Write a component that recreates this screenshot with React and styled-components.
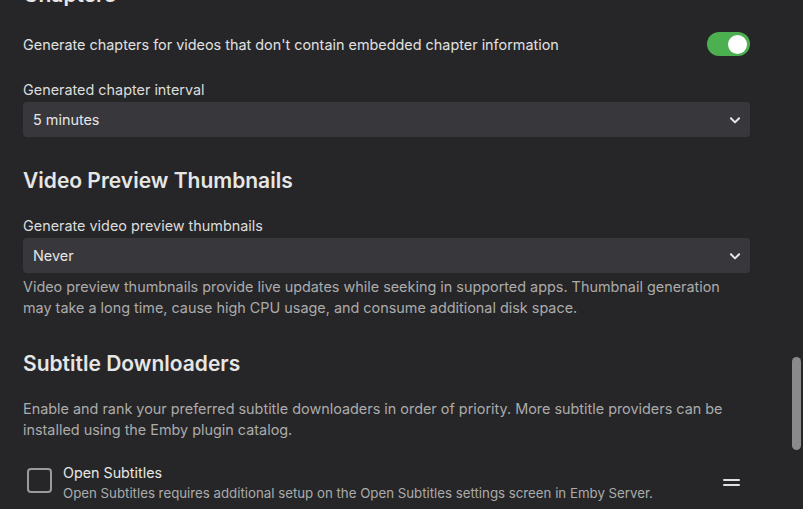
import React from "react";
import styled, { createGlobalStyle } from "styled-components";

const Global = createGlobalStyle`
  html, body { margin: 0; padding: 0; background: #262628; overflow: hidden; }
  body { font-family: Inter, "Noto Sans", "Liberation Sans", sans-serif; color: #e3e3e3; }
  * { box-sizing: border-box; }
`;

const Viewport = styled.div`
  position: relative;
  width: 803px;
  height: 509px;
  overflow: hidden;
  background: #262628;
`;

const Page = styled.div`
  width: 727px;
  margin: -18px 0 0 23px;
  display: flex;
  flex-direction: column;
`;

const Heading = styled.h2`
  margin: ${(p) => p.$mt || 0}px 0 0;
  font-size: 21px;
  line-height: 26px;
  font-weight: 600;
  color: #e6e6e6;
`;

const ToggleRow = styled.div`
  display: flex;
  align-items: center;
  justify-content: space-between;
  height: 24px;
  margin-top: 24px;
  font-size: 14.4px;
  color: #e0e0e0;
`;

const Switch = styled.div`
  position: relative;
  width: 43px;
  height: 24px;
  border-radius: 12px;
  background: #4caf50;
  flex-shrink: 0;
`;

const Knob = styled.div`
  position: absolute;
  right: 3px;
  top: 2.5px;
  width: 19px;
  height: 19px;
  border-radius: 50%;
  background: #fff;
`;

const Label = styled.div`
  margin-top: ${(p) => p.$mt || 0}px;
  font-size: 14.4px;
  line-height: 20px;
  color: #dcdcdc;
`;

const Select = styled.div`
  margin-top: 2px;
  height: 35px;
  border-radius: 4px;
  background: #38383c;
  display: flex;
  align-items: center;
  justify-content: space-between;
  padding: 0 8px 0 10px;
  font-size: 14.4px;
  color: #e6e6e6;
`;

const Description = styled.p`
  margin: ${(p) => p.$mt || 0}px 0 0;
  font-size: 14.4px;
  line-height: 21px;
  color: #ababab;
`;

const ProviderRow = styled.div`
  margin-top: 23px;
  display: flex;
  align-items: flex-start;
  gap: 11px;
  padding-left: 4px;
`;

const Checkbox = styled.div`
  width: 25px;
  height: 25px;
  border: 2px solid #9a9a9a;
  border-radius: 4px;
  flex-shrink: 0;
  margin-top: 5px;
`;

const ProviderText = styled.div`
  flex: 1;
  display: flex;
  flex-direction: column;
`;

const ProviderName = styled.div`
  font-size: 14.3px;
  line-height: 20px;
  color: #e6e6e6;
`;

const ProviderNote = styled.div`
  font-size: 13.27px;
  line-height: 20px;
  color: #ababab;
`;

const DragHandle = styled.div`
  width: 17px;
  display: flex;
  flex-direction: column;
  gap: 3px;
  margin: 16px 10px 0 0;
  span {
    display: block;
    height: 2px;
    border-radius: 1px;
    background: #e0e0e0;
  }
`;

const ScrollThumb = styled.div`
  position: absolute;
  left: 792px;
  top: 357px;
  width: 9px;
  height: 93px;
  border-radius: 5px;
  background: #8a8a8a;
`;

const Chevron = () => (
  <svg width="14" height="14" viewBox="0 0 24 24" fill="none" stroke="#e8e8e8" strokeWidth="3.4" strokeLinecap="round" strokeLinejoin="round">
    <polyline points="5 9 12 16 19 9" />
  </svg>
);

export default function App() {
  return (
    <Viewport>
      <Global />
      <Page>
        <Heading>Chapters</Heading>
        <ToggleRow>
          <span>Generate chapters for videos that don't contain embedded chapter information</span>
          <Switch><Knob /></Switch>
        </ToggleRow>
        <Label $mt={24}>Generated chapter interval</Label>
        <Select>
          <span>5 minutes</span>
          <Chevron />
        </Select>

        <Heading $mt={31}>Video Preview Thumbnails</Heading>
        <Label $mt={22}>Generate video preview thumbnails</Label>
        <Select>
          <span>Never</span>
          <Chevron />
        </Select>
        <Description $mt={3}>
          Video preview thumbnails provide live updates while seeking in supported apps. Thumbnail generation may take a long time, cause high CPU usage, and consume additional disk space.
        </Description>

        <Heading $mt={33}>Subtitle Downloaders</Heading>
        <Description $mt={21}>
          Enable and rank your preferred subtitle downloaders in order of priority. More subtitle providers can be installed using the Emby plugin catalog.
        </Description>
        <ProviderRow>
          <Checkbox />
          <ProviderText>
            <ProviderName>Open Subtitles</ProviderName>
            <ProviderNote>Open Subtitles requires additional setup on the Open Subtitles settings screen in Emby Server.</ProviderNote>
          </ProviderText>
          <DragHandle><span /><span /></DragHandle>
        </ProviderRow>
      </Page>
      <ScrollThumb />
    </Viewport>
  );
}
